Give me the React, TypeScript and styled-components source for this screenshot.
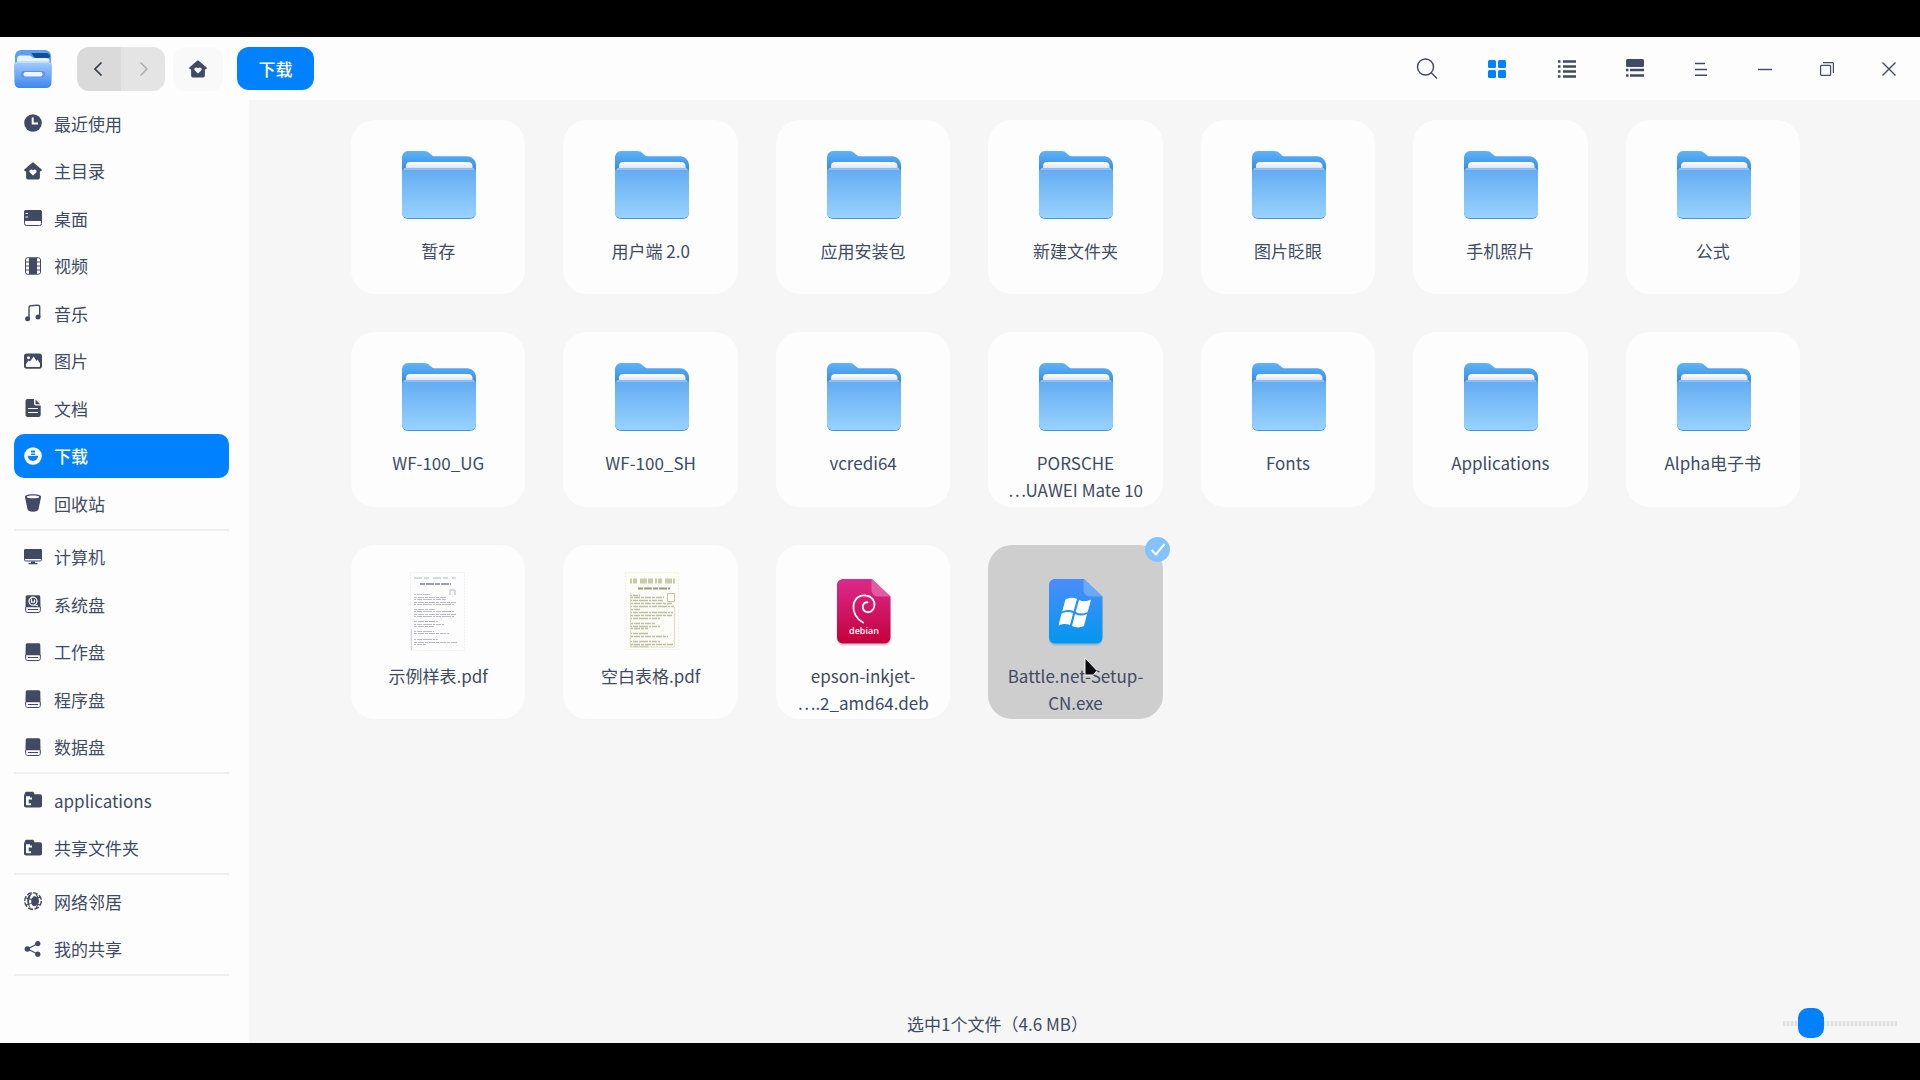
import React, { useState } from "react";
import styled, { createGlobalStyle, css } from "styled-components";

const ink = "#414a63";
const blue = "#0081ff";

const GlobalStyle = createGlobalStyle`
  * { box-sizing: border-box; }
  body { margin: 0; background: #000; }
  button { font: inherit; color: inherit; border: 0; padding: 0; background: none; cursor: default; }
  ul { margin: 0; padding: 0; list-style: none; }
`;

const Screen = styled.div`
  display: flex;
  flex-direction: column;
  min-height: 100vh;
  padding: 37px 0;
  background: #000;
  color: ${ink};
  font-family: "Noto Sans CJK SC", "Noto Sans", sans-serif;
  font-size: 17px;
  line-height: 27px;
`;

const TitleBar = styled.header`
  display: flex;
  align-items: center;
  height: 63px;
  padding-left: 14px;
  background: #fdfdfe;
`;

const Logo = styled.svg`
  width: 38px;
  height: 38px;
  margin-right: 25px;
`;

const History = styled.div`
  display: flex;
  width: 88px;
  height: 44px;
  margin-right: 8px;
  border-radius: 12px;
  overflow: hidden;
`;

const HistoryButton = styled.button<{ $dim?: boolean }>`
  display: grid;
  place-items: center;
  flex: 1;
  background: ${(p) => (p.$dim ? "#e4e4e4" : "#dadada")};
  color: ${(p) => (p.$dim ? "#a9a9ad" : "#333a48")};
`;

const HomeButton = styled.button`
  display: grid;
  place-items: center;
  width: 50px;
  height: 44px;
  margin-right: 14px;
  border-radius: 12px;
  background: #f9f9fa;
`;

const Crumb = styled.button`
  width: 77px;
  height: 43px;
  border-radius: 12px;
  background: ${blue};
  color: #fff;
  font-weight: 500;
`;

const Tools = styled.div`
  display: flex;
  align-items: center;
  margin-left: auto;
`;

const ToolButton = styled.button<{ $width: number; $active?: boolean }>`
  display: grid;
  place-items: center;
  width: ${(p) => p.$width}px;
  height: 44px;
  color: ${(p) => (p.$active ? blue : ink)};
`;

const Body = styled.div`
  display: flex;
  flex: 1;
`;

const Sidebar = styled.nav`
  display: flex;
  flex-direction: column;
  width: 249px;
  padding: 0 20px 64px 14px;
  background: #fdfdfe;
`;

const Places = styled.ul`
  display: flex;
  flex-direction: column;
  flex: 1;
`;

const Place = styled.li`
  display: flex;
  flex: 1;
  min-height: 40px;
  padding: 1px 0 2px;
`;

const PlaceButton = styled.button<{ $active: boolean }>`
  display: flex;
  align-items: center;
  gap: 12px;
  flex: 1;
  padding: 0 10px;
  border-radius: 10px;
  text-align: left;
  ${(p) =>
    p.$active &&
    css`
      background: ${blue};
      color: #fff;
      font-weight: 500;
    `}
`;

const Rule = styled.li`
  height: 2px;
  margin: 1px 0 3px;
  background: #efeff2;
`;

const Content = styled.main`
  display: flex;
  flex-direction: column;
  flex: 1;
  background: #f6f6f6;
`;

const Files = styled.ul`
  display: grid;
  grid-template-columns: repeat(7, minmax(0, 1fr));
  gap: 38px;
  padding: 20px 120px 20px 102px;
`;

const FileCell = styled.li`
  position: relative;
`;

const FileCard = styled.button<{ $selected: boolean }>`
  display: flex;
  flex-direction: column;
  align-items: center;
  gap: 11px;
  width: 100%;
  aspect-ratio: 1;
  padding-top: 26px;
  border-radius: 24px;
  background: ${(p) => (p.$selected ? "#cecece" : "#fdfdfe")};
`;

const Art = styled.svg`
  width: 80px;
  height: 80px;
`;

const Line = styled.span`
  display: block;
  white-space: nowrap;
`;

const Badge = styled.svg`
  position: absolute;
  top: -8px;
  right: -7px;
  width: 25px;
  height: 25px;
`;

const Pointer = styled.svg`
  position: absolute;
  top: 112px;
  left: 96px;
  width: 14px;
  height: 20px;
`;

const StatusBar = styled.footer`
  display: flex;
  align-items: center;
  height: 40px;
  margin-top: auto;
`;

const StatusText = styled.p`
  flex: 1;
  margin: 0;
  text-align: center;
`;

const ZoomBox = styled.div`
  display: flex;
  justify-content: flex-end;
  width: 174px;
  padding-right: 23px;
`;

const Zoom = styled.input`
  appearance: none;
  width: 114px;
  height: 30px;
  margin: 0;
  background: none;

  &::-webkit-slider-runnable-track {
    height: 5px;
    background: repeating-linear-gradient(90deg, #dfdfdf 0 2px, #efefef 2px 4px);
  }
  &::-webkit-slider-thumb {
    appearance: none;
    width: 26px;
    height: 30px;
    margin-top: -13px;
    border-radius: 10px;
    background: ${blue};
  }
`;

const Glyph = styled.svg`
  width: 18px;
  height: 18px;
  flex: none;
`;

const homePath =
  "M9 .3 11.2 1.9 13 3.5 17.6 7.6C18.2 8.3 17.8 9.2 17 9.2H15.9V15.6C15.9 16.7 15.2 17.4 14.2 17.4H3.8C2.8 17.4 2.1 16.7 2.1 15.6V9.2H1C.2 9.2-.2 8.3.4 7.6L6 2.5ZM9 13.6 12.2 10.4C13.6 8.6 11.2 6.3 9 8.2 6.8 6.3 4.4 8.6 5.8 10.4Z";

const disk = (
  <>
    <path fill="currentColor" d="M3.5.2h11c1 0 1.700.7 1.800 1.700l.2 10.300h-15l.2-10.300C1.800.9 2.500.2 3.500.2Z" />
    <path fill="none" stroke="currentColor" d="M1.700 12v3.500c0 1.200.8 2 2 2h10.600c1.200 0 2-.8 2-2V12" />
    <path stroke="currentColor" strokeWidth="1" d="M4 14.500h10" />
  </>
);

const sharedFolder = (
  <path
    fill="currentColor"
    fillRule="evenodd"
    d="M2 .8h6.300c.8 0 1.200.3 1.600 1l.6 1.400h5.500c1.200 0 2 .8 2 2v9.300c0 1.200-.8 2-2 2H2c-1.200 0-2-.8-2-2V4.500L1.200 1.500C1.400 1 1.600.8 2 .8ZM2 5.200v8.300c0 .5.300.8.8.8H7V12.300H4.700V8.500H8V6.500H6V5.200Z"
  />
);

const glyphs: Record<string, React.ReactNode> = {
  recent: (
    <>
      <circle cx="9" cy="9" r="8.8" fill="currentColor" />
      <path d="M8.7 3.5V9.600H14" fill="none" stroke="#fdfdfe" strokeWidth="2" />
    </>
  ),
  home: <path d={homePath} fill="currentColor" fillRule="evenodd" />,
  desktop: (
    <>
      <rect x=".5" y="1.500" width="17" height="15" rx="2" fill="none" stroke="currentColor" />
      <path fill="currentColor" d="M2 1h14c1 0 2 .8 2 2V12H0V3c0-1.200 1-2 2-2Z" />
      <path stroke="#fdfdfe" d="M1.500 4.500H4M1.500 8H4" />
    </>
  ),
  video: (
    <>
      <rect x="1.500" y=".8" width="15" height="16.400" rx="2" fill="none" stroke="currentColor" />
      <path fill="currentColor" d="M5 .8h8v16.400H5Z" />
      <path stroke="currentColor" d="M1.500 5h3.500M1.500 9h3.500M1.500 13h3.500M13 5h3.500M13 9h3.500M13 13h3.500" />
    </>
  ),
  music: (
    <>
      <path fill="none" stroke="currentColor" strokeWidth="1.400" d="M5 15V3.500C5 2.400 5.700 1.800 6.700 1.700L13.500 1.300c1.400-.1 2.200.5 2.200 1.700v10" />
      <circle cx="3.600" cy="14.800" r="2.500" fill="currentColor" />
      <circle cx="14" cy="12.900" r="2.500" fill="currentColor" />
    </>
  ),
  picture: (
    <path
      fill="currentColor"
      fillRule="evenodd"
      d="M2.500 1.500h13C17 1.500 18 2.500 18 4v10.200c0 1.500-1 2.500-2.500 2.500h-13C1 16.700 0 15.700 0 14.200V4C0 2.500 1 1.500 2.500 1.500ZM2 14c0 .6.400 1 1 1h12c.6 0 1-.4 1-1v-2.500L13.500 7.500l-1 1.500L9.700 4.500 6 9.500 4.500 8.500 2 12ZM4.500 4.200a1.500 1.500 0 1 0 .1 0Z"
    />
  ),
  document: (
    <>
      <path fill="currentColor" d="M3.500 0H10v4.500c0 1.200.8 2 2 2h4.700v9.300c0 1.200-.8 2.200-2 2.200H3.500c-1.200 0-2-.9-2-2.200V2.200C1.500.9 2.300 0 3.500 0ZM11.500.500l4.700 4.700h-4c-.5 0-.7-.3-.7-.7Z" />
      <path stroke="#fdfdfe" strokeWidth="1.100" d="M4 9.500h10M4 13.500h10" />
    </>
  ),
  download: (
    <>
      <circle cx="9" cy="9" r="8.800" fill="currentColor" />
      <path fill={blue} d="M7 3.500h4v5.300h3.200C14 11.800 12 14 9 14S4 11.800 3.800 8.800H7Z" />
      <path stroke="#fff" strokeWidth="1.200" d="M6.500 6h5M6.500 8.500h5" />
    </>
  ),
  trash: (
    <path
      fill="currentColor"
      fillRule="evenodd"
      d="M9 .3c4.500 0 8 .9 8 2.400 0 .3 0 .6-.1 1L14.500 15.300c-.4 1.700-2 2.400-5.500 2.400s-5.100-.7-5.500-2.400L1.100 3.700C1 3.300 1 3 1 2.700 1 1.200 4.500.3 9 .3ZM9 1.500c-3.600 0-6.300.6-6.300 1.400S5.400 4.300 9 4.300s6.300-.6 6.300-1.400S12.600 1.500 9 1.500Z"
    />
  ),
  computer: (
    <>
      <path fill="currentColor" d="M1.500 1h15c1 0 1.500.6 1.500 1.500V11H0V2.500C0 1.600.5 1 1.500 1ZM7 13.500h4v1.500h2.500v1.300h-9V15H7Z" />
      <path fill="none" stroke="currentColor" d="M.5 10v1.800c0 .7.400 1.200 1.200 1.200h14.600c.8 0 1.200-.5 1.200-1.200V10" />
    </>
  ),
  system: (
    <>
      {disk}
      <circle cx="9" cy="6.200" r="4" fill="none" stroke="#fdfdfe" strokeWidth="1.300" />
      <path fill="none" stroke="#fdfdfe" strokeWidth="1.200" d="M7.500 3.500v3.700h3V4.500M10 9.500l4 1.500" />
    </>
  ),
  disk,
  folder: sharedFolder,
  network: (
    <>
      <circle cx="9" cy="9" r="8.300" fill="none" stroke="currentColor" strokeWidth="1.400" strokeDasharray="5 1.500" />
      <path fill="currentColor" d="M9 1C4.500 4.500 4 12 7 16.500 3 14 2 6 5 3ZM10 4c-3 2-4 7-1 10 2 .5 4-.5 4-1.500L15 9 13 5Z" />
      <path fill="none" stroke="currentColor" strokeWidth="1.200" d="M2 6c4 2 10 2 14-1M2 13c4-2 10-2 14 0M12 2c3 4 3 10 0 14" />
    </>
  ),
  share: (
    <>
      <path stroke="currentColor" strokeWidth="1.200" d="M3.500 9 14 3.500M3.500 9 14 14.200" />
      <circle cx="3.400" cy="9" r="2.800" fill="currentColor" />
      <circle cx="13.800" cy="3.600" r="2.600" fill="currentColor" />
      <circle cx="13.800" cy="14.200" r="2.600" fill="currentColor" />
    </>
  ),
};

const Icon = ({ name }: { name: string }) => (
  <Glyph viewBox="0 0 18 18" aria-hidden="true">
    {glyphs[name]}
  </Glyph>
);

type Entry = [icon: string, label: string] | null;

const places: Entry[] = [
  ["recent", "最近使用"],
  ["home", "主目录"],
  ["desktop", "桌面"],
  ["video", "视频"],
  ["music", "音乐"],
  ["picture", "图片"],
  ["document", "文档"],
  ["download", "下载"],
  ["trash", "回收站"],
  null,
  ["computer", "计算机"],
  ["system", "系统盘"],
  ["disk", "工作盘"],
  ["disk", "程序盘"],
  ["disk", "数据盘"],
  null,
  ["folder", "applications"],
  ["folder", "共享文件夹"],
  null,
  ["network", "网络邻居"],
  ["share", "我的共享"],
  null,
];

type Kind = "folder" | "sample" | "blank" | "deb" | "exe";

const files: { kind: Kind; lines: string[]; selected?: boolean }[] = [
  { kind: "folder", lines: ["暂存"] },
  { kind: "folder", lines: ["用户端 2.0"] },
  { kind: "folder", lines: ["应用安装包"] },
  { kind: "folder", lines: ["新建文件夹"] },
  { kind: "folder", lines: ["图片眨眼"] },
  { kind: "folder", lines: ["手机照片"] },
  { kind: "folder", lines: ["公式"] },
  { kind: "folder", lines: ["WF-100_UG"] },
  { kind: "folder", lines: ["WF-100_SH"] },
  { kind: "folder", lines: ["vcredi64"] },
  { kind: "folder", lines: ["PORSCHE", "⋯UAWEI Mate 10"] },
  { kind: "folder", lines: ["Fonts"] },
  { kind: "folder", lines: ["Applications"] },
  { kind: "folder", lines: ["Alpha电子书"] },
  { kind: "sample", lines: ["示例样表.pdf"] },
  { kind: "blank", lines: ["空白表格.pdf"] },
  { kind: "deb", lines: ["epson-inkjet-", "⋯.2_amd64.deb"] },
  { kind: "exe", lines: ["Battle.net-Setup-", "CN.exe"], selected: true },
];

const FolderArt = () => (
  <>
    <path fill="url(#folderBack)" d="M4 12c0-4 2.500-7 6-7h16c3 0 4 .8 5.500 2.300L34 9.300c.8.800 1.500 1 2.500 1H69c5 0 9 4 9 9V40H4Z" />
    <path fill="url(#folderPaper)" d="M8 20c0-2.500 1.500-4 4-4h58c2.500 0 4.500 1.500 4.500 4v8H8Z" />
    <rect x="4" y="22" width="74" height="51" rx="6" fill="#3f97e4" />
    <path fill="url(#folderFront)" d="M4 26c0-2.500 1.500-4 4-4h66c2.500 0 4 1.500 4 4v40c0 3.500-2 6-6 6H10c-4 0-6-2.500-6-6Z" />
    <path stroke="#9bc4f4" strokeWidth="1.500" d="M6 23h70" />
  </>
);

const sampleRows = [
  [23, 16], [26, 33], [28, 32], [31, 42], [33, 40], [38, 22], [40, 41], [43, 42], [45, 40], [50, 24], [53, 30], [55, 20], [60, 20], [62, 35], [68, 24], [71, 43], [73, 12],
];

const blankRows = [
  [24, 10], [26, 34], [29, 33], [32, 42], [35, 44], [38, 10], [41, 43], [44, 42], [47, 30], [52, 25], [55, 30], [57, 18], [62, 18], [65, 38], [70, 30], [73, 44], [75, 18],
];

const SampleArt = () => (
  <>
    <rect x="12.500" y="1.500" width="54" height="78" fill="#fdfdfd" stroke="#e2e2ea" strokeDasharray="1 2" />
    <path stroke="#b4b4c8" strokeDasharray="8 2 5 4" d="M16 7h42" />
    <path stroke="#9c9cb4" strokeWidth="2" strokeDasharray="5 1 8 1" d="M22 13h31" />
    <path fill="none" stroke="#b4b4c8" d="M52 24v-5h5v5" />
    {sampleRows.map(([y, w], i) => (
      <path
        key={y}
        stroke="#a9a9be"
        opacity=".8"
        strokeDasharray={i % 2 ? "3 1 6 1" : "2 1 5 1 9 1"}
        d={`M16 ${y}.5h${w}`}
      />
    ))}
    <path stroke="#d4d4e0" d="M13.500 58v21" />
  </>
);

const BlankArt = () => (
  <>
    <rect x="14.500" y="1.500" width="53" height="77" fill="#fdfdf8" stroke="#e8e8cf" strokeDasharray="1 2" />
    <path stroke="#bcbc98" strokeWidth="5" strokeDasharray="2 1 4 3 7 1 5 2" opacity=".8" d="M19 10h45" />
    <path stroke="#98987c" strokeWidth="2" strokeDasharray="5 1 8 1" d="M27 17.500h32" />
    <path fill="none" stroke="#c4c4a4" d="M56.500 22.500h7v8h-7Z" />
    {blankRows.map(([y, w], i) => (
      <path
        key={y}
        stroke="#a8a884"
        strokeWidth="1.500"
        opacity=".75"
        strokeDasharray={i % 2 ? "3 1 6 1" : "2 1 5 1 9 1"}
        d={`M19 ${y}.5h${w}`}
      />
    ))}
    <path stroke="#dcdcc0" fill="none" d="M19.500 22v54h44V36" />
  </>
);

const sheet = "M20 8h29L67.500 25.500V66c0 4-2.500 6.500-6.500 6.500H20.500C16.500 72.500 14 70 14 66V14.500C14 10.500 16.500 8 20.500 8Z";

const DebArt = () => (
  <>
    <path d={sheet} transform="translate(0 2)" fill="#c2004a" opacity=".2" />
    <path d={sheet} fill="url(#debFill)" />
    <path d="M49 8 67.500 25.500H54.500C51 25.500 48.500 22.500 48.500 19V8Z" fill="#e66fae" opacity=".75" />
    <path
      d="M40 51.500C33.500 48 29.500 41 30.500 34.500 31.500 27 37 23.500 43 24.500c6 .8 9 5.500 8.500 10C51 39.500 47 42 43.500 41 39.500 40 38.500 35 41 32.500c1-1 2-1.500 3.500-1.200"
      fill="none"
      stroke="#fff"
      strokeWidth="1.800"
      strokeLinecap="round"
    />
    <text x="41" y="63" textAnchor="middle" fill="#fff" fontFamily="'Open Sans', sans-serif" fontWeight="600" fontSize="9">
      debian
    </text>
  </>
);

const ExeArt = () => (
  <>
    <path d={sheet} transform="translate(0 2)" fill="#0b7ad8" opacity=".25" />
    <path d={sheet} fill="url(#exeFill)" />
    <path d="M49 8 67.500 25.500H54.500C51 25.500 48.500 22.500 48.500 19V8Z" fill="#7ab2f8" opacity=".75" />
    <path
      fill="#fff"
      transform="translate(1 0)"
      d="M29.500 28.500c4-2 7.500-2.300 11.500-.5l-3.300 12c-4-1.500-7.500-1.500-11.500.5ZM43 29c4 1.800 8 1.500 12-.5L51.700 41c-4 2-8 2-12 0ZM25.600 42.500c4-2 7.500-2 11.500-.5L34 54c-4-1.500-7.500-1.500-11.500.5ZM39 43c4 2 8 2 12 0L48 55c-4 2-8 1.700-12 0Z"
    />
  </>
);

const art: Record<Kind, React.ReactNode> = {
  folder: <FolderArt />,
  sample: <SampleArt />,
  blank: <BlankArt />,
  deb: <DebArt />,
  exe: <ExeArt />,
};

const Defs = styled.svg`
  display: block;
  width: 0;
  height: 0;
`;

const Gradients = () => (
  <Defs aria-hidden="true">
    <defs>
      <linearGradient id="folderBack" x1="0" y1="0" x2="0" y2="1">
        <stop offset="0" stopColor="#5eb4fa" />
        <stop offset=".5" stopColor="#3a8fe0" />
      </linearGradient>
      <linearGradient id="folderPaper" x1="0" y1="0" x2="0" y2="1">
        <stop offset="0" stopColor="#ffffff" />
        <stop offset="1" stopColor="#b9c9ee" />
      </linearGradient>
      <linearGradient id="folderFront" x1="0" y1="0" x2="0" y2="1">
        <stop offset="0" stopColor="#62abf1" />
        <stop offset="1" stopColor="#98d2ff" />
      </linearGradient>
      <linearGradient id="debFill" x1="0" y1="0" x2="0" y2="1">
        <stop offset="0" stopColor="#dc2a8b" />
        <stop offset="1" stopColor="#c4003c" />
      </linearGradient>
      <linearGradient id="exeFill" x1="0" y1="0" x2="0" y2="1">
        <stop offset="0" stopColor="#4a8dfb" />
        <stop offset="1" stopColor="#0397ee" />
      </linearGradient>
      <linearGradient id="logoFill" x1="0" y1="0" x2="0" y2="1">
        <stop offset="0" stopColor="#a4cdfc" />
        <stop offset="1" stopColor="#3d86f2" />
      </linearGradient>
    </defs>
  </Defs>
);

const App = () => {
  const [zoom, setZoom] = useState(17);
  return (
    <Screen>
      <GlobalStyle />
      <Gradients />
      <TitleBar>
        <Logo viewBox="0 0 38 38" aria-hidden="true">
          <rect x="1" y="0" width="36" height="24" rx="6" fill="#5c9ff6" />
          <path d="M17 3h15c2.500 0 4 1 4 3.500L35 8H21Z" fill="#0f4f9c" />
          <path d="M3 9.500C3 7 4 5.500 6.500 5.500H15c1.500 0 2 .5 3 1.500L19.500 8H32c2.500 0 3.500 1 3.500 3v4H3Z" fill="#e6f2ff" />
          <path d="M0 16c0-3 2-4.500 5-4.500h28c3 0 5 1.500 5 4.500l-.5 16c0 4-2 6-6 6h-25c-4 0-6-2-6-6Z" fill="url(#logoFill)" />
          <path d="M2 14c1-1.300 2-1.500 4-1.500h26c2 0 3 .2 4 1.500" fill="none" stroke="#c5e0ff" />
          <rect x="7" y="21" width="24" height="6.500" rx="3.200" fill="#5b95ec" />
          <rect x="9.500" y="22" width="19" height="4.500" rx="2.200" fill="#eef5ff" />
        </Logo>
        <History>
          <HistoryButton aria-label="后退">
            <svg width="10" height="14" viewBox="0 0 10 14" fill="none" stroke="currentColor" strokeWidth="1.600">
              <path d="M7.500.5 1 7l6.500 6.500" />
            </svg>
          </HistoryButton>
          <HistoryButton $dim aria-label="前进">
            <svg width="10" height="14" viewBox="0 0 10 14" fill="none" stroke="currentColor" strokeWidth="1.400">
              <path d="M2.500.5 9 7l-6.500 6.500" />
            </svg>
          </HistoryButton>
        </History>
        <HomeButton aria-label="主目录">
          <Icon name="home" />
        </HomeButton>
        <Crumb>下载</Crumb>
        <Tools>
          <ToolButton $width={70} aria-label="搜索">
            <svg width="22" height="22" viewBox="0 0 22 22" fill="none" stroke="currentColor" strokeWidth="1.400">
              <circle cx="9.500" cy="9" r="8" />
              <path d="m15 14.500 6 6" />
            </svg>
          </ToolButton>
          <ToolButton $width={70} $active aria-label="图标视图">
            <svg width="18" height="18" viewBox="0 0 18 18" fill="currentColor">
              <rect width="8" height="8" rx="1.500" />
              <rect x="10" width="8" height="8" rx="1.500" />
              <rect y="10" width="8" height="8" rx="1.500" />
              <rect x="10" y="10" width="8" height="8" rx="1.500" />
            </svg>
          </ToolButton>
          <ToolButton $width={70} aria-label="列表视图">
            <svg width="18" height="18" viewBox="0 0 18 18" stroke="currentColor" strokeWidth="2.400">
              <path d="M0 1.500h2.500M5 1.500h13M0 6.500h2.500M5 6.500h13M0 11.500h2.500M5 11.500h13M0 16.500h2.500M5 16.500h13" />
            </svg>
          </ToolButton>
          <ToolButton $width={66} aria-label="分栏视图">
            <svg width="18" height="20" viewBox="0 0 18 20" stroke="currentColor" strokeWidth="2.400">
              <rect width="18" height="8" rx="1.500" fill="currentColor" stroke="none" />
              <path d="M0 11h2.500M4 11h14M0 16.500h2.500M4 16.500h14" />
            </svg>
          </ToolButton>
          <ToolButton $width={66} aria-label="菜单">
            <svg width="14" height="14" viewBox="0 0 14 14" stroke="currentColor" strokeWidth="1.500">
              <path d="M1 1.500h10M1 7.500h12M1 13.200h12" />
            </svg>
          </ToolButton>
          <ToolButton $width={62} aria-label="最小化">
            <svg width="14" height="14" viewBox="0 0 14 14" stroke="currentColor" strokeWidth="1.400">
              <path d="M0 7.500h14" />
            </svg>
          </ToolButton>
          <ToolButton $width={62} aria-label="还原">
            <svg width="14" height="14" viewBox="0 0 14 14" fill="none" stroke="currentColor" strokeWidth="1.200">
              <rect x=".6" y="3.400" width="10" height="10" rx="1" />
              <path d="M3 .6h9.400c.6 0 1 .4 1 1V11" />
            </svg>
          </ToolButton>
          <ToolButton $width={62} aria-label="关闭">
            <svg width="14" height="14" viewBox="0 0 14 14" stroke="currentColor" strokeWidth="1.400">
              <path d="m.5.5 13 13M13.500.5l-13 13" />
            </svg>
          </ToolButton>
        </Tools>
      </TitleBar>
      <Body>
        <Sidebar>
          <Places>
            {places.map((entry, i) =>
              entry ? (
                <Place key={i}>
                  <PlaceButton $active={entry[0] === "download"}>
                    <Icon name={entry[0]} />
                    {entry[1]}
                  </PlaceButton>
                </Place>
              ) : (
                <Rule key={i} role="separator" />
              )
            )}
          </Places>
        </Sidebar>
        <Content>
          <Files>
            {files.map((file) => (
              <FileCell key={file.lines[0]}>
                <FileCard $selected={!!file.selected}>
                  <Art viewBox="0 0 80 80" aria-hidden="true">
                    {art[file.kind]}
                  </Art>
                  <span>
                    {file.lines.map((line) => (
                      <Line key={line}>{line}</Line>
                    ))}
                  </span>
                </FileCard>
                {file.selected && (
                  <>
                    <Badge viewBox="0 0 25 25" aria-hidden="true">
                      <circle cx="12.500" cy="12.500" r="12.500" fill="#84c2fb" />
                      <path d="m6.500 13 4.500 4.500L19.500 7" fill="none" stroke="#fff" strokeWidth="2" />
                    </Badge>
                    <Pointer viewBox="0 0 14 20" aria-hidden="true">
                      <path d="M1 1v17h8.500l3.500-4.500Z" fill="#0c0c0c" stroke="#f4f4f4" />
                    </Pointer>
                  </>
                )}
              </FileCell>
            ))}
          </Files>
          <StatusBar>
            <StatusText>选中1个文件（4.6 MB）</StatusText>
            <ZoomBox>
              <Zoom
                type="range"
                aria-label="图标大小"
                min={0}
                max={100}
                value={zoom}
                onChange={(e) => setZoom(Number(e.target.value))}
              />
            </ZoomBox>
          </StatusBar>
        </Content>
      </Body>
    </Screen>
  );
};

export default App;
